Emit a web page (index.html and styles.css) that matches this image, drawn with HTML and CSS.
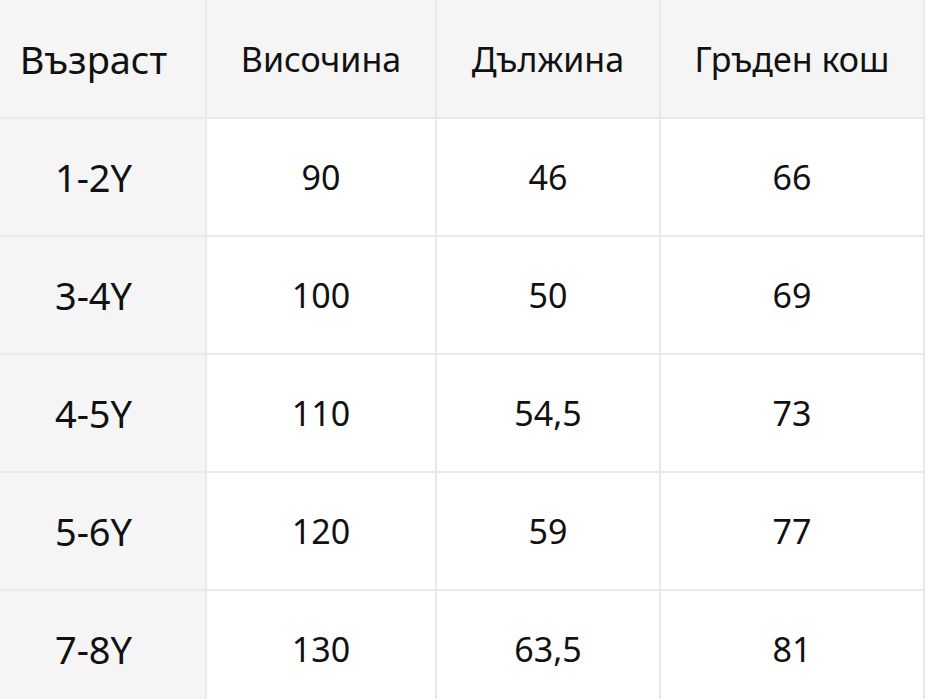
FILE: index.html
```html
<!DOCTYPE html>
<html lang="bg">
<head>
<meta charset="utf-8">
<link rel="stylesheet" href="styles.css">
</head>
<body>
<div class="table">
  <div class="cell head first">Възраст</div>
  <div class="cell head">Височина</div>
  <div class="cell head">Дължина</div>
  <div class="cell head">Гръден кош</div>

  <div class="cell first">1-2Y</div>
  <div class="cell">90</div>
  <div class="cell">46</div>
  <div class="cell">66</div>

  <div class="cell first">3-4Y</div>
  <div class="cell">100</div>
  <div class="cell">50</div>
  <div class="cell">69</div>

  <div class="cell first">4-5Y</div>
  <div class="cell">110</div>
  <div class="cell">54,5</div>
  <div class="cell">73</div>

  <div class="cell first">5-6Y</div>
  <div class="cell">120</div>
  <div class="cell">59</div>
  <div class="cell">77</div>

  <div class="cell first">7-8Y</div>
  <div class="cell">130</div>
  <div class="cell">63,5</div>
  <div class="cell">81</div>
</div>
</body>
</html>
```
FILE: styles.css
```css
html, body {
  margin: 0;
  padding: 0;
  background: #ffffff;
  overflow: hidden;
}
.table {
  display: grid;
  width: 923px;
  grid-template-columns: 205px 228px 222px 262px;
  grid-template-rows: 117px repeat(5, 116px);
  gap: 2px;
  background: #e9e9e9;
  border-right: 2px solid #e9e9e9;
  font-family: "Noto Sans", sans-serif;
  font-size: 34px;
  color: #111111;
}
.cell {
  background: #ffffff;
  display: flex;
  align-items: center;
  justify-content: center;
}
.head, .first {
  background: #f5f5f5;
}
.first {
  padding-right: 18px;
  font-size: 38px;
}
```
